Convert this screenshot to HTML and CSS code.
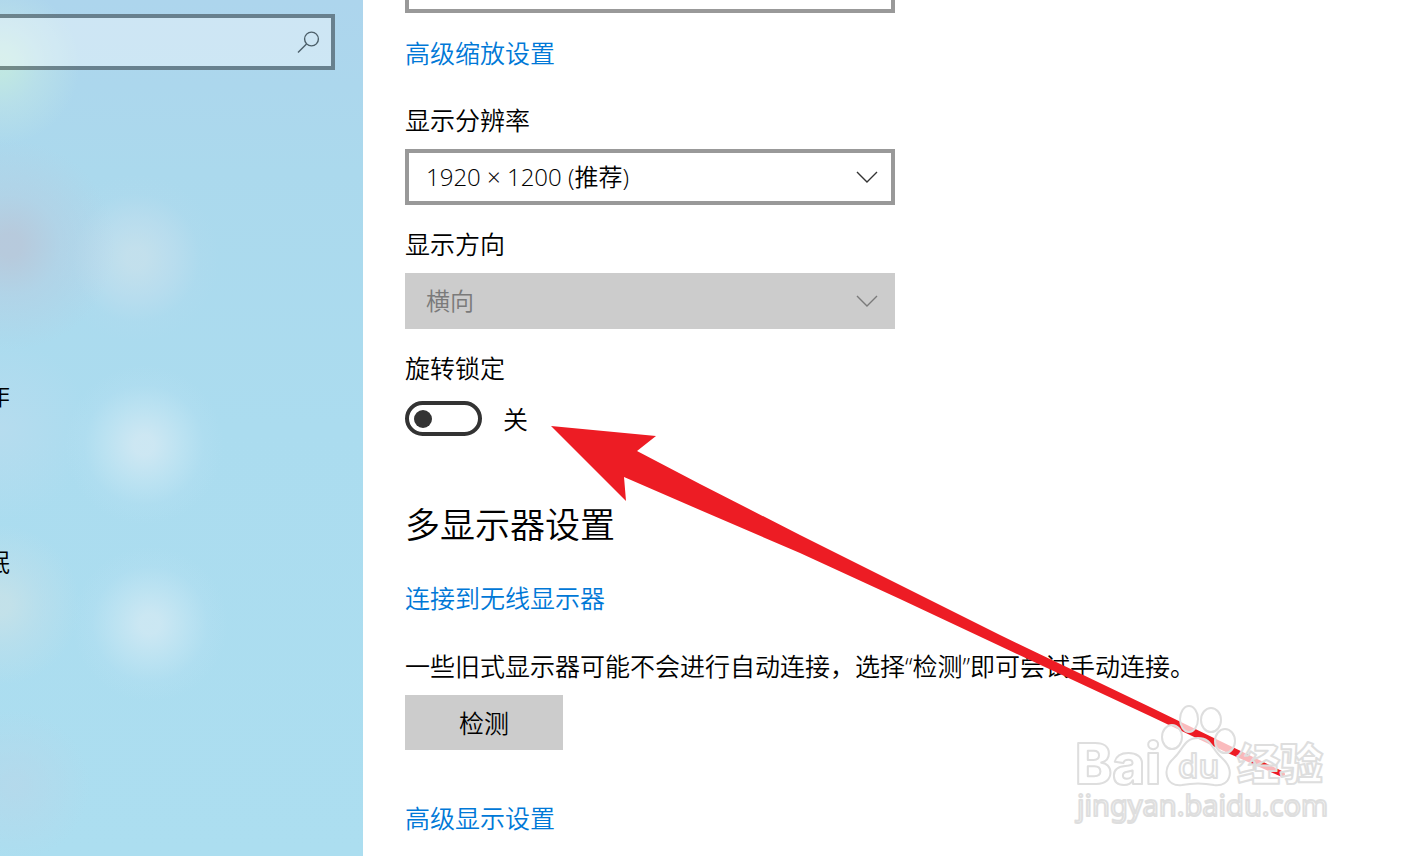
FILE: index.html
```html
<!DOCTYPE html>
<html lang="zh-CN">
<head>
    <meta charset="UTF-8">
    <meta name="viewport" content="width=device-width, initial-scale=1.0">
    <title>显示设置</title>
    <link rel="stylesheet" href="styles.css">
</head>
<body>
    <div class="settings">
        <aside class="sidebar">
            <div class="search">
                <input type="text" class="search-input" aria-label="search">
                <svg class="search-icon" width="24" height="24" viewBox="0 0 24 24">
                    <circle cx="14.500" cy="9" r="6.900"/>
                    <path d="M9.500 14 L1 22.500"/>
                </svg>
            </div>
            <nav class="nav">
                <a href="#" class="nav-item">作</a>
                <a href="#" class="nav-item">眠</a>
            </nav>
        </aside>

        <main class="content">
            <div class="select-box">
                <select class="select" aria-label="scale"></select>
            </div>
            <a href="#" class="link">高级缩放设置</a>

            <div class="field field-first">
                <label for="resolution">显示分辨率</label>
                <div class="select-box">
                    <select class="select" id="resolution">
                        <option>1920 × 1200 (推荐)</option>
                    </select>
                    <svg class="chevron" width="22" height="12" viewBox="0 0 22 12"><path d="M1 1 L11 11 L21 1"/></svg>
                </div>
            </div>

            <div class="field">
                <label for="orientation">显示方向</label>
                <div class="select-box">
                    <select class="select" id="orientation" disabled>
                        <option>横向</option>
                    </select>
                    <svg class="chevron chevron-off" width="22" height="12" viewBox="0 0 22 12"><path d="M1 1 L11 11 L21 1"/></svg>
                </div>
            </div>

            <div class="field">
                <label for="rotation">旋转锁定</label>
                <div class="toggle-row">
                    <input type="checkbox" class="toggle" id="rotation">
                    <span>关</span>
                </div>
            </div>

            <h2 class="title">多显示器设置</h2>
            <a href="#" class="link">连接到无线显示器</a>
            <p class="note">一些旧式显示器可能不会进行自动连接，选择“检测”即可尝试手动连接。</p>
            <button type="button" class="detect">检测</button>
            <a href="#" class="link link-last">高级显示设置</a>
        </main>

        <!-- red pointer + watermark -->
        <svg class="overlay" width="1402" height="856" viewBox="0 0 1402 856">
            <path class="arrow" d="M551 426 L656 436 L637 451 L700 484 L800 535 L900 585 L1000 635 L1150 707 L1284 772 Q1287 776 1282 777 L1230 754 L1150 716 L1000 646 L900 599 L800 553 L700 510 L624 477 L626 501 Z"/>
            <g class="watermark">
                <path d="M1198 738 C1184 738 1183 750 1174 758 C1161 770 1166 787 1182 785 C1192 783 1204 783 1214 785 C1231 787 1235 770 1222 758 C1212 750 1212 738 1198 738 Z"/>
                <ellipse cx="1189" cy="719" rx="9" ry="13"/>
                <ellipse cx="1211" cy="720" rx="10" ry="12"/>
                <ellipse cx="1172" cy="737" rx="10" ry="12"/>
                <ellipse cx="1225" cy="741" rx="10" ry="12"/>
                <text class="wm-bai" x="1075" y="784">Bai</text>
                <text class="wm-du" x="1178" y="778">du</text>
                <text class="wm-cn" x="1237" y="780">经验</text>
                <text class="wm-url" x="1077" y="816">jingyan.baidu.com</text>
            </g>
        </svg>
    </div>
</body>
</html>
```

FILE: styles.css
```css
* {
    box-sizing: border-box;
}

body {
    margin: 0;
    font-family: 'Open Sans', 'Noto Sans CJK SC', sans-serif;
    font-size: 25px;
    font-weight: 350;
    line-height: 32px;
    color: #000;
    background-color: #fff;
}

.settings {
    position: relative;
    display: flex;
    height: 100vh;
    overflow: hidden;
}

.sidebar {
    flex: 0 0 363px;
    padding-top: 14px;
    overflow: hidden;
    background:
        radial-gradient(circle at 0 65px, rgba(200, 238, 222, 0.7) 10px, rgba(200, 235, 228, 0.4) 40px, transparent 80px),
        radial-gradient(circle at 10px 245px, rgba(186, 198, 216, 0.8) 12px, rgba(186, 202, 222, 0.4) 50px, transparent 105px),
        radial-gradient(circle at 136px 258px, rgba(200, 225, 236, 0.8) 10px, rgba(196, 223, 238, 0.5) 40px, rgba(190, 220, 238, 0.1) 64px, transparent 84px),
        radial-gradient(circle at 144px 445px, rgba(208, 232, 243, 0.9) 10px, rgba(198, 230, 243, 0.6) 38px, rgba(190, 226, 243, 0.2) 60px, transparent 80px),
        radial-gradient(circle at 0 430px, rgba(186, 220, 238, 0.7), transparent 90px),
        radial-gradient(circle at 150px 624px, rgba(206, 232, 243, 0.9) 10px, rgba(198, 230, 243, 0.6) 36px, rgba(190, 226, 243, 0.2) 58px, transparent 78px),
        radial-gradient(circle at 0 605px, rgba(200, 226, 232, 0.8) 10px, rgba(194, 224, 234, 0.5) 40px, transparent 80px),
        radial-gradient(circle at 15px 785px, rgba(182, 216, 234, 0.8), transparent 75px),
        linear-gradient(#add5ed, #abd9ed 20%, #abdcef 50%, #acdef0);
}

.search {
    position: relative;
    margin-right: 28px;
}

.search-input {
    display: block;
    width: 100%;
    height: 56px;
    padding: 0 48px 0 12px;
    border: 4px solid rgba(0, 0, 0, 0.4);
    border-left: none;
    border-radius: 0;
    background-color: rgba(255, 255, 255, 0.4);
    background-clip: padding-box;
    font: inherit;
}

.search-icon {
    position: absolute;
    right: 14px;
    top: 16px;
    fill: none;
    stroke: #4c5f69;
    stroke-width: 1.4;
}

.nav {
    display: flex;
    flex-direction: column;
    gap: 135px;
    margin-top: 309px;
    margin-left: -15px;
}

.nav-item {
    color: #000;
    text-decoration: none;
}

.content {
    flex: 1;
    display: flex;
    flex-direction: column;
    align-items: flex-start;
    margin-top: -43px;
    padding-left: 42px;
}

.select-box {
    position: relative;
    width: 490px;
}

.select {
    display: block;
    width: 100%;
    height: 56px;
    padding: 0 48px 0 17px;
    border: 4px solid #999;
    border-radius: 0;
    background-color: #fff;
    color: #000;
    font: inherit;
    font-size: 24px;
    appearance: none;
}

.select:disabled {
    border-color: #ccc;
    background-color: #ccc;
    color: #7a7a7a;
    opacity: 1;
}

.chevron {
    position: absolute;
    right: 17px;
    top: 22px;
    fill: none;
    stroke: #333;
    stroke-width: 1.4;
    pointer-events: none;
}

.chevron-off {
    stroke: #7a7a7a;
}

.link {
    margin-top: 24px;
    color: #0078d7;
    text-decoration: none;
}

.field {
    margin-top: 23px;
}

.field-first {
    margin-top: 35px;
}

.field label {
    display: block;
    margin-bottom: 13px;
}

.toggle-row {
    display: flex;
    align-items: center;
    gap: 21px;
    padding-top: 4px;
}

.toggle {
    display: flex;
    align-items: center;
    width: 77px;
    height: 35px;
    margin: 0;
    padding-left: 5px;
    border: 4px solid #333;
    border-radius: 18px;
    appearance: none;
}

.toggle::before {
    content: "";
    width: 18px;
    height: 18px;
    border-radius: 50%;
    background-color: #333;
}

.toggle:checked {
    justify-content: flex-end;
    padding: 0 5px 0 0;
}

.title {
    margin: 65px 0 9px;
    font-size: 35px;
    font-weight: 350;
    line-height: 48px;
}

.note {
    margin: 36px 0 13px;
}

.detect {
    width: 158px;
    height: 55px;
    border: none;
    background-color: #ccc;
    color: #000;
    font: inherit;
}

.link-last {
    margin-top: 52px;
}

.overlay {
    position: absolute;
    left: 0;
    top: 0;
    pointer-events: none;
}

.arrow {
    fill: #ed1c24;
}

.watermark {
    fill: rgba(255, 255, 255, 0.7);
    stroke: #dedede;
    stroke-width: 2;
    stroke-linejoin: round;
}

.wm-bai {
    font: 800 56px 'Inter', sans-serif;
}

.wm-du {
    font: 600 33px 'Open Sans', sans-serif;
}

.wm-cn {
    font: 900 43px 'Noto Sans CJK SC', sans-serif;
}

.wm-url {
    font: 29px 'Noto Sans', sans-serif;
}
```
